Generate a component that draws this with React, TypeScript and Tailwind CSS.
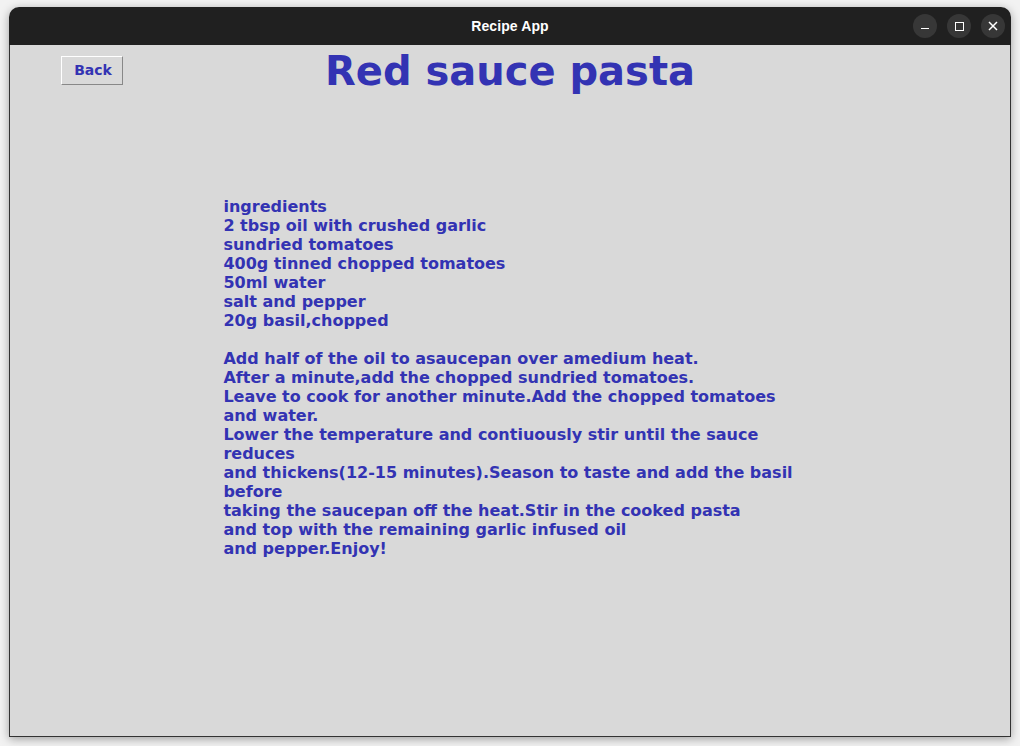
import React from 'react';

const ingredients = [
  'ingredients',
  '2 tbsp oil with crushed garlic',
  'sundried tomatoes',
  '400g tinned chopped tomatoes',
  '50ml water',
  'salt and pepper',
  '20g basil,chopped',
];

const method = [
  'Add half of the oil to asaucepan over amedium heat.',
  'After a minute,add the chopped sundried tomatoes.',
  'Leave to cook for another minute.Add the chopped tomatoes',
  'and water.',
  'Lower the temperature and contiuously stir until the sauce',
  'reduces',
  'and thickens(12-15 minutes).Season to taste and add the basil',
  'before',
  'taking the saucepan off the heat.Stir in the cooked pasta',
  'and top with the remaining garlic infused oil',
  'and pepper.Enjoy!',
];

const WinButton: React.FC<{ children: React.ReactNode }> = ({ children }) => (
  <div className="w-6 h-6 rounded-full bg-[#373737] flex items-center justify-center">{children}</div>
);

export default function App() {
  return (
    <div className="w-[1020px] h-[746px] bg-[#f2f2f2] pt-[7px] px-[9px] overflow-hidden">
      <div className="w-[1002px] h-[730px] flex flex-col rounded-t-[10px] overflow-hidden shadow-[0_2px_10px_rgba(0,0,0,0.35)]">
        {/* title bar */}
        <div className="h-[38px] shrink-0 bg-[#202020] relative flex items-center justify-center">
          <span className="text-white text-[14px] font-bold font-['Liberation_Sans',sans-serif] tracking-[0.1px]">
            Recipe App
          </span>
          <div className="absolute right-[6px] top-[7px] flex gap-[10px]">
            <WinButton>
              <div className="w-[8px] h-[1.5px] bg-white mt-[5px]" />
            </WinButton>
            <WinButton>
              <div className="w-[9px] h-[9px] border-[1.5px] border-white" />
            </WinButton>
            <WinButton>
              <svg width="10" height="10" viewBox="0 0 10 10">
                <path d="M1 1L9 9M9 1L1 9" stroke="white" strokeWidth="1.5" />
              </svg>
            </WinButton>
          </div>
        </div>

        {/* content */}
        <div className="flex-1 bg-[#d9d9d9] border-x border-b border-[#333333] font-['DejaVu_Sans',sans-serif] font-bold text-[#3333b3]">
          <div className="relative h-[47px] mt-[3px]">
            <button className="absolute left-[51px] top-[8px] w-[62px] h-[29px] bg-[#d9d9d9] border border-t-white border-l-white border-b-[#888888] border-r-[#888888] text-[14px] font-bold text-[#3333b3] pl-[2px]">
              Back
            </button>
            <h1 className="text-center text-[40px] leading-[47px] font-bold">Red sauce pasta</h1>
          </div>
          <div className="flex justify-center mt-[102px] pr-[4px]">
            <div className="text-[16px] leading-[19px] text-left whitespace-pre">
              {[...ingredients, '', ...method].map((line, i) => (
                <div key={i} className="h-[19px]">{line}</div>
              ))}
            </div>
          </div>
        </div>
      </div>
    </div>
  );
}
